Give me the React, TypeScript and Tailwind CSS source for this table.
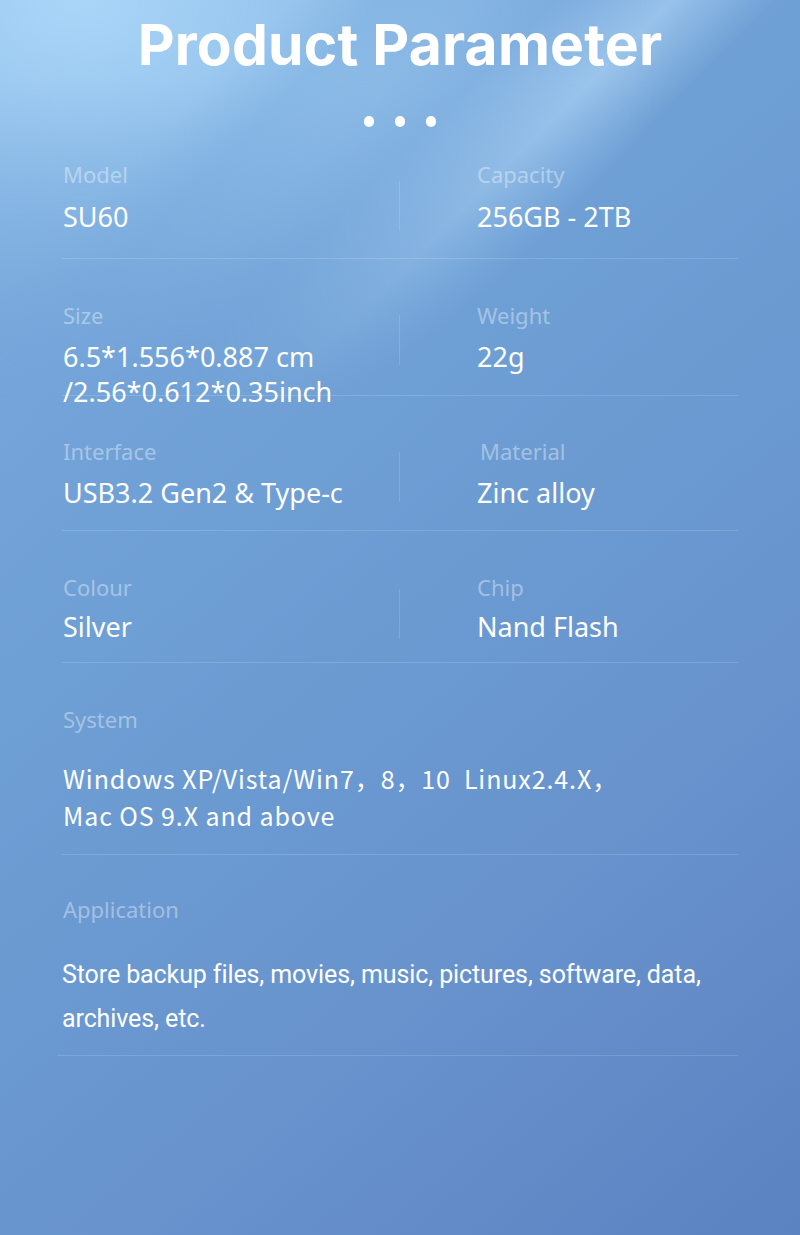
import type { ReactNode } from "react";

type Pair = {
  label: string;
  value: ReactNode;
  right: string;
  rightValue: string;
  height: string;
  pad: string;
  gap: string;
  divider: string;
  rightLabelClass?: string;
};

const pairs: Pair[] = [
  {
    label: "Model",
    value: "SU60",
    right: "Capacity",
    rightValue: "256GB - 2TB",
    height: "h-[119px]",
    pad: "pt-[22px]",
    gap: "mt-[13px]",
    divider: "mt-[41px]",
  },
  {
    label: "Size",
    value: (
      <>
        6.5*1.556*0.887 cm
        <br />
        /2.56*0.612*0.35inch
      </>
    ),
    right: "Weight",
    rightValue: "22g",
    height: "h-[137px]",
    pad: "pt-[44px]",
    gap: "mt-[12px]",
    divider: "mt-[56px]",
  },
  {
    label: "Interface",
    value: "USB3.2 Gen2 & Type-c",
    right: "Material",
    rightValue: "Zinc alloy",
    height: "h-[135px]",
    pad: "pt-[43px]",
    gap: "mt-[12px]",
    divider: "mt-[56px]",
    rightLabelClass: "pl-[3px]",
  },
  {
    label: "Colour",
    value: "Silver",
    right: "Chip",
    rightValue: "Nand Flash",
    height: "h-[132px]",
    pad: "pt-[44px]",
    gap: "mt-[10px]",
    divider: "mt-[58px]",
  },
];

function Label({ children, className = "" }: { children: ReactNode; className?: string }) {
  return (
    <p className={`text-[22px] leading-[24px] text-white/40 ${className}`}>
      {children}
    </p>
  );
}

export default function App() {
  return (
    <div className="relative h-[1235px] w-[800px] overflow-hidden bg-[linear-gradient(140deg,#7cacdf_0%,#6d9ed4_40%,#6893cd_70%,#5b82c1_100%)] font-['Noto_Sans','Roboto',sans-serif] text-white">
      {/* light glow and streaks behind the heading */}
      <div className="pointer-events-none absolute inset-x-0 top-0 h-[520px] bg-[linear-gradient(135deg,rgba(190,225,252,0)_42%,rgba(190,225,252,0.5)_51%,rgba(190,225,252,0)_59%),linear-gradient(135deg,rgba(120,170,220,0)_22%,rgba(120,170,220,0.35)_29%,rgba(120,170,220,0)_36%),radial-gradient(ellipse_75%_80%_at_10%_0%,rgba(172,216,249,0.95)_0%,rgba(172,216,249,0.45)_50%,rgba(172,216,249,0)_100%)] [mask-image:linear-gradient(to_bottom,black_15%,transparent_80%)]" />

      <div className="relative">
        <header className="flex flex-col items-center pt-[16px]">
          <h1 className="font-['Inter',sans-serif] text-[57px] leading-[58px] font-bold tracking-[0.2px]">
            Product Parameter
          </h1>
          <div className="mt-[42px] flex gap-[21px]">
            <span className="h-[11px] w-[10px] rounded-full bg-white" />
            <span className="h-[11px] w-[10px] rounded-full bg-white" />
            <span className="h-[11px] w-[10px] rounded-full bg-white" />
          </div>
        </header>

        <main className="mx-[62px] mt-[13px]">
          {pairs.map((row) => (
            <section
              key={row.label}
              className={`flex border-b border-white/15 ${row.height}`}
            >
              <div className={`w-[337px] pl-[1px] ${row.pad}`}>
                <Label>{row.label}</Label>
                <p className={`${row.gap} text-[27px] leading-[35px] whitespace-nowrap`}>
                  {row.value}
                </p>
              </div>
              <div className={`h-[50px] w-px self-start bg-white/15 ${row.divider}`} />
              <div className={`pl-[77px] ${row.pad}`}>
                <Label className={row.rightLabelClass}>{row.right}</Label>
                <p className={`${row.gap} text-[27px] leading-[35px]`}>
                  {row.rightValue}
                </p>
              </div>
            </section>
          ))}

          <section className="h-[192px] border-b border-white/15 pt-[44px] pl-[1px]">
            <Label>System</Label>
            <p className="mt-[29px] font-['Noto_Sans_CJK_SC',sans-serif] text-[25px] leading-[37px] tracking-[0.9px]">
              Windows XP/Vista/Win7，8，10&nbsp; Linux2.4.X，
              <br />
              Mac OS 9.X and above
            </p>
          </section>

          <section className="-ml-[5px] h-[201px] border-b border-white/15 pt-[42px] pl-[5px]">
            <Label className="pl-[1px]">Application</Label>
            <p className="mt-[32px] font-['Roboto',sans-serif] text-[25px] leading-[44px] tracking-[-0.1px]">
              Store backup files, movies, music, pictures, software, data,
              <br />
              archives, etc.
            </p>
          </section>
        </main>
      </div>
    </div>
  );
}
